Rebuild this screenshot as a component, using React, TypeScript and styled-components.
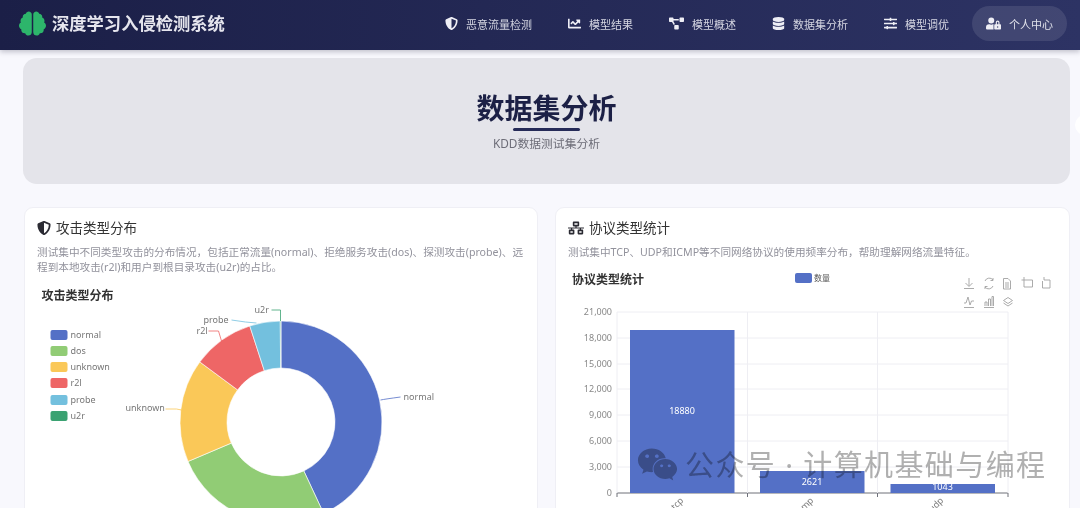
import React from "react";
import styled, { createGlobalStyle } from "styled-components";
import {
  FaBrain,
  FaChartLine,
  FaDatabase,
  FaNetworkWired,
  FaProjectDiagram,
  FaShieldAlt,
  FaSlidersH,
  FaUserLock,
  FaWeixin,
} from "react-icons/fa";

const navItems = [
  { label: "恶意流量检测", icon: <FaShieldAlt /> },
  { label: "模型结果", icon: <FaChartLine /> },
  { label: "模型概述", icon: <FaProjectDiagram /> },
  { label: "数据集分析", icon: <FaDatabase /> },
  { label: "模型调优", icon: <FaSlidersH /> },
];

// donut slices in degrees clockwise from 12 o'clock
const slices = [
  { name: "normal", color: "#5470c6", from: 0, to: 155 },
  { name: "dos", color: "#91cc75", from: 155, to: 247 },
  { name: "unknown", color: "#fac858", from: 247, to: 306.5 },
  { name: "r2l", color: "#ee6666", from: 306.5, to: 342 },
  { name: "probe", color: "#73c0de", from: 342, to: 359.6 },
  { name: "u2r", color: "#3ba272", from: 359.6, to: 360 },
];

const legendY = [330, 346, 362, 378, 395, 411];

const pt = (r: number, deg: number) => {
  const a = (deg * Math.PI) / 180;
  return `${(280.5 + r * Math.sin(a)).toFixed(2)} ${(422 - r * Math.cos(a)).toFixed(2)}`;
};

const slicePath = (from: number, to: number) => {
  const big = to - from > 180 ? 1 : 0;
  return `M${pt(101, from)}A101 101 0 ${big} 1 ${pt(101, to)}L${pt(54, to)}A54 54 0 ${big} 0 ${pt(54, from)}Z`;
};

const leaders = [
  { text: "normal", x: 403, y: 400, color: "#5470c6", d: "M380 400Q385 399 400 397" },
  { text: "unknown", x: 125, y: 411, color: "#fac858", d: "M165 409L176 409L181 410" },
  { text: "r2l", x: 196, y: 334, color: "#ee6666", d: "M208 331L218 331L221 341" },
  { text: "probe", x: 203, y: 323, color: "#73c0de", d: "M231 320L245 322L256 323" },
  { text: "u2r", x: 254, y: 313, color: "#3ba272", d: "M271 310L280 310L280 321" },
];

const yTicks = [
  { label: "21,000", y: 312 },
  { label: "18,000", y: 338 },
  { label: "15,000", y: 364 },
  { label: "12,000", y: 389 },
  { label: "9,000", y: 415 },
  { label: "6,000", y: 441 },
  { label: "3,000", y: 467 },
  { label: "0", y: 493 },
];

const bars = [
  { name: "tcp", x: 630, top: 330, value: 18880, labelY: 414, tickX: 684 },
  { name: "icmp", x: 760, top: 471, value: 2621, labelY: 485, tickX: 814 },
  { name: "udp", x: 890.5, top: 484, value: 1043, labelY: 490, tickX: 944 },
];

const AttackChart: React.FC = () => (
  <ChartSvg viewBox="37 283 487 225" $h={225}>
    <text x="41" y="300" fontSize="12" fontWeight="700" fill="#333">
      攻击类型分布
    </text>
    {slices.map((s, i) => (
      <g key={s.name}>
        <rect x="50" y={legendY[i]} width="17" height="10" rx="2" fill={s.color} />
        <text x="70" y={legendY[i] + 8} fontSize="9" fill="#777">
          {s.name}
        </text>
        <path d={slicePath(s.from, s.to)} fill={s.color} stroke="#fff" strokeWidth="0.6" />
      </g>
    ))}
    {leaders.map((l) => (
      <g key={l.text}>
        <path d={l.d} fill="none" stroke={l.color} strokeWidth="0.8" />
        <text x={l.x} y={l.y} fontSize="9" fill="#777">
          {l.text}
        </text>
      </g>
    ))}
  </ChartSvg>
);

const ProtocolChart: React.FC = () => (
  <ChartSvg viewBox="568 268 489 240" $h={240}>
    <text x="572" y="284" fontSize="12" fontWeight="700" fill="#333">
      协议类型统计
    </text>
    <rect x="795" y="273" width="17" height="10" rx="2" fill="#5470c6" />
    <text x="814" y="281" fontSize="8" fill="#555">
      数量
    </text>

    <g fill="none" stroke="#a2a2a2" strokeWidth="0.9">
      <path d="M969 278V286M965.5 283L969 286.5L972.5 283M964 288.5H974" />
      <path d="M985 281A4.6 4.6 0 0 1 993 280M993 286A4.6 4.6 0 0 1 985 287M993 278V280.5H990.5M985 289V286.5H987.5" />
      <path d="M1003.5 278.5H1008L1010.5 281V289H1003.5ZM1005 283H1009M1005 285H1009M1005 287H1009" />
      <path d="M1024 277V287H1032.5V280H1021.5" />
      <path d="M1044 277V280H1050V288H1042.5V281" />
      <path d="M964 303H966L968 297L970 305L971.5 301H974M964 307.5H974" />
      <path d="M985 306V302H987V306M988.5 306V299H990.5V306M992 306V296.5H993.5V306M984 307.5H994" />
      <path d="M1003.5 300.5L1008 297.5L1012.5 300.5L1008 303.5ZM1003.5 303L1008 306L1012.5 303" />
    </g>

    {yTicks.map((t) => (
      <g key={t.label}>
        <line x1="617" x2="1008" y1={t.y} y2={t.y} stroke={t.y === 493 ? "#6e7079" : "#eeeef3"} />
        <text x="612" y={t.y + 3} fontSize="9" fill="#888" textAnchor="end">
          {t.label}
        </text>
      </g>
    ))}
    {[617, 747.5, 877.5, 1008].map((x) => (
      <g key={x}>
        <line x1={x} x2={x} y1="312" y2="493" stroke="#eeeef3" />
        <line x1={x} x2={x} y1="493" y2="497" stroke="#6e7079" />
      </g>
    ))}
    {bars.map((b) => (
      <g key={b.name}>
        <rect x={b.x} y={b.top} width="104.5" height={493 - b.top} fill="#5470c6" />
        <text x={b.x + 52} y={b.labelY} fontSize="9" fill="#fff" textAnchor="middle">
          {b.value}
        </text>
        <text
          x={b.tickX}
          y="501"
          fontSize="9"
          fill="#777"
          textAnchor="end"
          transform={`rotate(-45 ${b.tickX} 501)`}
        >
          {b.name}
        </text>
      </g>
    ))}
  </ChartSvg>
);

const App: React.FC = () => (
  <Page>
    <GlobalStyle />
    <Header>
      <Brand>
        <BrandIcon>
          <FaBrain />
        </BrandIcon>
        <BrandText>深度学习入侵检测系统</BrandText>
      </Brand>
      <Nav>
        {navItems.map((item) => (
          <NavItem key={item.label}>
            {item.icon}
            {item.label}
          </NavItem>
        ))}
        <UserButton>
          <FaUserLock />
          个人中心
        </UserButton>
      </Nav>
    </Header>

    <Main>
      <Hero>
        <HeroTitle>数据集分析</HeroTitle>
        <HeroRule />
        <HeroSub>KDD数据测试集分析</HeroSub>
      </Hero>

      <CardGrid>
        <Card>
          <CardTitle $iconSize={14}>
            <FaShieldAlt />
            攻击类型分布
          </CardTitle>
          <CardDesc>
            测试集中不同类型攻击的分布情况，包括正常流量(normal)、拒绝服务攻击(dos)、探测攻击(probe)、远程到本地攻击(r2l)和用户到根目录攻击(u2r)的占比。
          </CardDesc>
          <AttackChart />
        </Card>
        <Card>
          <CardTitle $iconSize={16}>
            <FaNetworkWired />
            协议类型统计
          </CardTitle>
          <CardDesc>测试集中TCP、UDP和ICMP等不同网络协议的使用频率分布，帮助理解网络流量特征。</CardDesc>
          <ProtocolChart />
        </Card>
      </CardGrid>
    </Main>

    <SideBlob />
    <Watermark>
      <FaWeixin />
      <span>公众号 · 计算机基础与编程</span>
    </Watermark>
  </Page>
);

const GlobalStyle = createGlobalStyle`
  html, body {
    margin: 0;
    height: 100%;
    overflow: hidden;
    background: #f8f8fd;
    font-family: "Noto Sans", "Noto Sans CJK SC", sans-serif;
  }
`;

const Page = styled.div`
  position: relative;
  height: 508px;
  overflow: hidden;
`;

const Header = styled.header`
  height: 50px;
  box-sizing: border-box;
  display: flex;
  align-items: center;
  justify-content: space-between;
  padding: 0 13px 3px 19px;
  background: linear-gradient(90deg, #1b1f47 0%, #2d3364 100%);
  box-shadow: 0 2px 5px rgba(30, 30, 60, 0.25);
`;

const Brand = styled.div`
  display: flex;
  align-items: center;
  gap: 6px;
`;

const BrandIcon = styled.span`
  display: flex;
  font-size: 27px;
  color: #2db56b;
`;

const BrandText = styled.span`
  font-size: 17.3px;
  line-height: 1;
  font-weight: 700;
  color: #e6e6ee;
`;

const Nav = styled.nav`
  display: flex;
  align-items: center;
`;

const NavItem = styled.div`
  display: flex;
  align-items: center;
  gap: 8px;
  margin-right: 36px;
  font-size: 11px;
  color: #d5d6e2;

  svg {
    font-size: 13px;
    color: #eeeef5;
  }

  &:nth-child(3) svg {
    font-size: 15px;
  }

  &:nth-child(5) {
    margin-right: 23px;
  }
`;

const UserButton = styled.div`
  width: 95px;
  height: 35px;
  box-sizing: border-box;
  display: flex;
  align-items: center;
  justify-content: center;
  gap: 8px;
  border-radius: 18px;
  background: rgba(255, 255, 255, 0.1);
  font-size: 11px;
  color: #e0e1ea;

  svg {
    font-size: 15px;
    color: #eeeef5;
  }
`;

const Main = styled.main`
  padding: 8px 10px 0 23px;
`;

const Hero = styled.section`
  height: 126px;
  box-sizing: border-box;
  padding-top: 32px;
  display: flex;
  flex-direction: column;
  align-items: center;
  border-radius: 14px;
  background: #e4e4ea;
`;

const HeroTitle = styled.h1`
  margin: 0;
  font-size: 28px;
  line-height: 36px;
  font-weight: 700;
  color: #1c2046;
`;

const HeroRule = styled.div`
  width: 67px;
  height: 3px;
  margin-top: 2px;
  border-radius: 2px;
  background: #262b58;
`;

const HeroSub = styled.p`
  margin: 3px 0 0;
  font-size: 11.8px;
  line-height: 18px;
  color: #6d6d78;
`;

const CardGrid = styled.div`
  display: grid;
  grid-template-columns: 514px 515px;
  gap: 17px;
  margin: 23px 0 0 1px;
`;

const Card = styled.article`
  height: 340px;
  box-sizing: border-box;
  padding: 12px;
  border-radius: 9px;
  background: #fff;
  border: 1px solid #efeff5;
`;

const CardTitle = styled.h2<{ $iconSize: number }>`
  display: flex;
  align-items: center;
  gap: 5px;
  margin: 0;
  font-size: 13.5px;
  line-height: 16px;
  font-weight: 400;
  color: #333;

  svg {
    font-size: ${(p) => p.$iconSize}px;
    color: #2b2b33;
  }
`;

const CardDesc = styled.p`
  margin: 9px 0 0;
  font-size: 10.65px;
  line-height: 15px;
  color: #92929c;
`;

const ChartSvg = styled.svg<{ $h: number }>`
  display: block;
  width: 100%;
  height: ${(p) => p.$h}px;
  margin-top: 8px;
  font-family: "Noto Sans", "Noto Sans CJK SC", sans-serif;
`;

const SideBlob = styled.div`
  position: absolute;
  top: 115px;
  left: 1075px;
  width: 20px;
  height: 20px;
  border-radius: 50%;
  background: #fff;
`;

const Watermark = styled.div`
  position: absolute;
  left: 637px;
  top: 444px;
  display: flex;
  align-items: center;
  gap: 7px;
  font-size: 29px;
  line-height: 40px;
  letter-spacing: 1.4px;
  white-space: nowrap;
  color: #b0b0b0;
  mix-blend-mode: multiply;

  svg {
    font-size: 41px;
  }
`;

export default App;
